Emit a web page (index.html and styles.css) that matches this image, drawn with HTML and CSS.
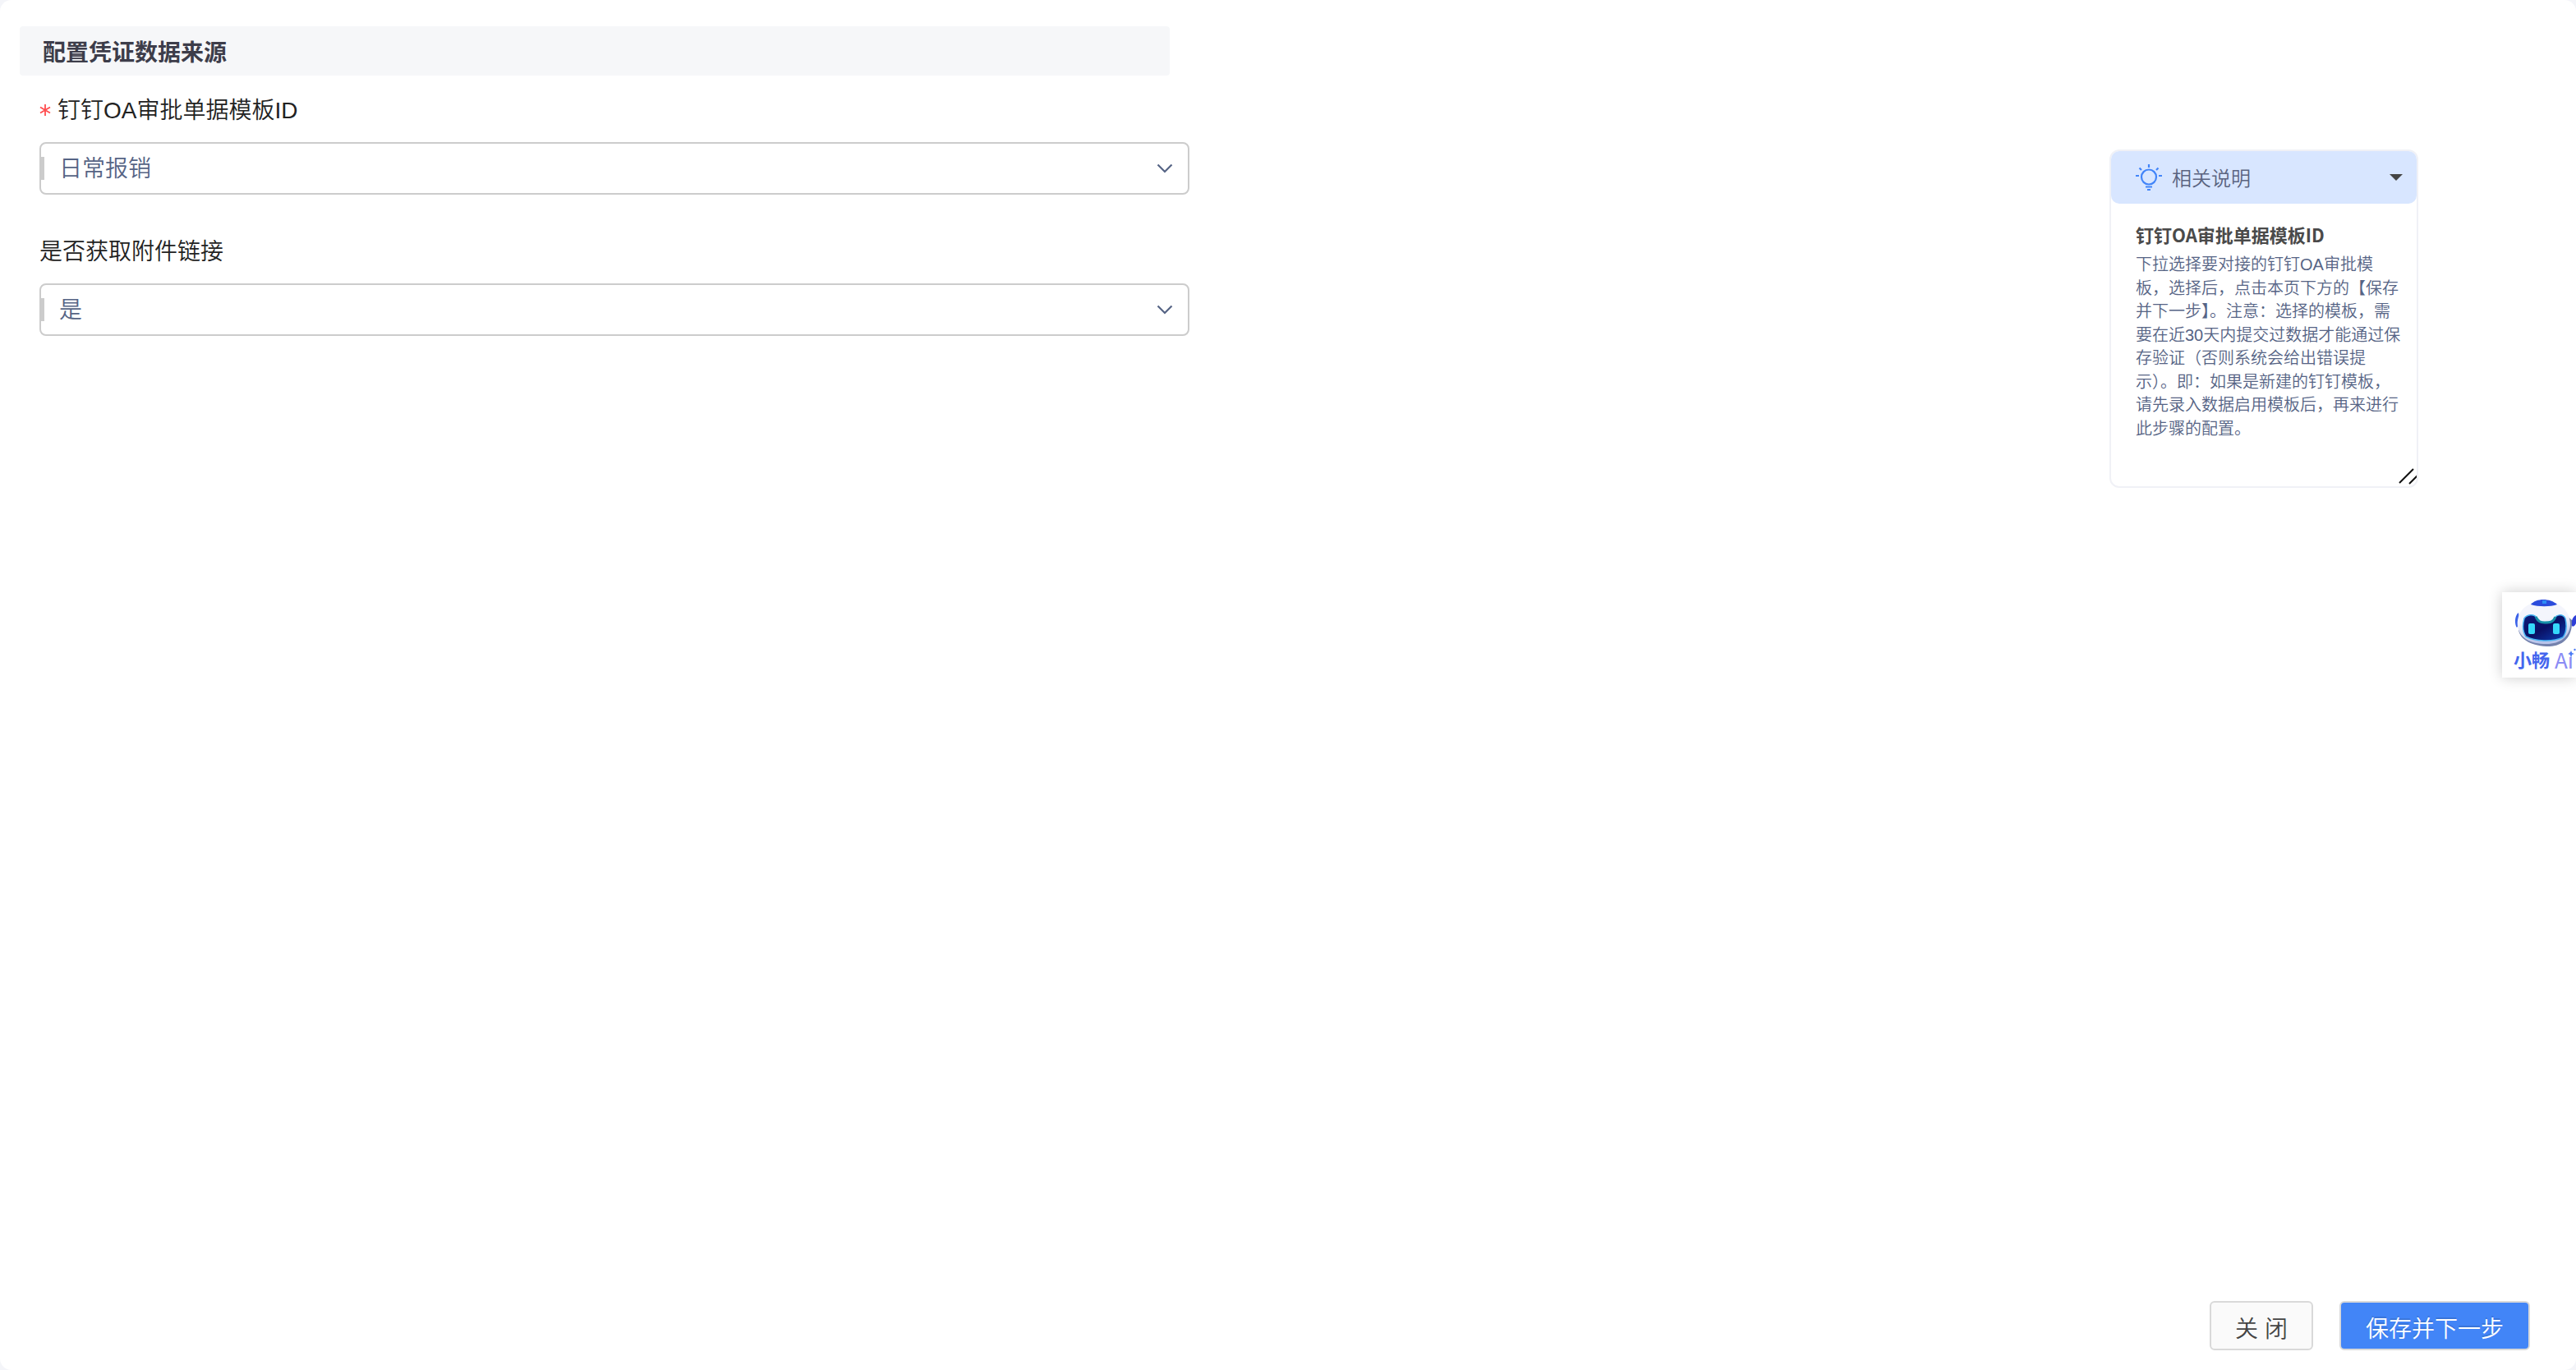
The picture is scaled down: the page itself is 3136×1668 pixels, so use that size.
FILE: index.html
```html
<!DOCTYPE html>
<html lang="zh-CN">
<head>
    <meta charset="UTF-8">
    <meta name="viewport" content="width=device-width, initial-scale=1.0">
    <title>配置凭证数据来源</title>
    <link rel="stylesheet" href="styles.css">
</head>
<body>
    <div class="page">
        <div class="main">
            <!-- 左侧表单 -->
            <form class="form">
                <h2 class="title">配置凭证数据来源</h2>
                <div class="item">
                    <label class="label">
                        <svg class="required" width="14" height="16" viewBox="0 0 14 16">
                            <path d="M7 1V15M1 4.5L13 11.5M13 4.5L1 11.5" />
                        </svg>
                        钉钉OA审批单据模板ID
                    </label>
                    <div class="select">
                        <span class="value">日常报销</span>
                        <svg class="arrow" width="20" height="12" viewBox="0 0 20 12">
                            <path d="M1.5 1.5L10 10L18.5 1.5" />
                        </svg>
                    </div>
                </div>
                <div class="item">
                    <label class="label">是否获取附件链接</label>
                    <div class="select">
                        <span class="value">是</span>
                        <svg class="arrow" width="20" height="12" viewBox="0 0 20 12">
                            <path d="M1.5 1.5L10 10L18.5 1.5" />
                        </svg>
                    </div>
                </div>
            </form>
            <!-- 右侧说明 -->
            <div class="help">
                <div class="help-head">
                    <svg class="bulb" width="32" height="32" viewBox="0 0 32 32">
                        <circle cx="16" cy="15.5" r="9" />
                        <path d="M12 27.5H20M14 31H18M16 0V4M0 14H4M28 14H32M4.5 4.5L7 7M27.5 4.5L25 7" />
                    </svg>
                    <span class="help-name">相关说明</span>
                    <i class="caret"></i>
                </div>
                <div class="help-body">
                    <h3>钉钉OA审批单据模板ID</h3>
                    <p>下拉选择要对接的钉钉OA审批模板，选择后，点击本页下方的【保存并下一步】。注意：选择的模板，需要在近30天内提交过数据才能通过保存验证（否则系统会给出错误提示）。即：如果是新建的钉钉模板，请先录入数据启用模板后，再来进行此步骤的配置。</p>
                </div>
                <svg class="resize" width="22" height="20" viewBox="0 0 22 20">
                    <path d="M1 18L18 1M13 19L23 9" />
                </svg>
            </div>
        </div>
        <!-- 底部按钮 -->
        <div class="footer">
            <button class="btn">关 闭</button>
            <button class="btn primary">保存并下一步</button>
        </div>
    </div>
    <!-- 悬浮的智能助手 -->
    <div class="robot">
        <svg class="face" width="76" height="60" viewBox="0 0 76 60">
            <defs>
                <linearGradient id="head" x1="0" y1="0" x2="0.2" y2="1">
                    <stop offset="0.5" stop-color="#f4f5fc" />
                    <stop offset="1" stop-color="#b9c4ea" />
                </linearGradient>
                <linearGradient id="screen" x1="0" y1="0" x2="1" y2="1">
                    <stop offset="0" stop-color="#0d1a78" />
                    <stop offset="0.5" stop-color="#0a1064" />
                    <stop offset="1" stop-color="#0c3fb4" />
                </linearGradient>
            </defs>
            <path d="M6 17C1 20 1 32 4 35L8 30Z" fill="#3b62e8" />
            <path d="M76 20C72 21 69 30 71 33C73 35 75 32 76 30Z" fill="#2f3fd8" />
            <path d="M6 38C8 50 22 58 44 58C62 57 72 45 71 26L64 20Z" fill="#7482ad" />
            <path d="M5 34C3 22 10 3 37 3C58 3 69 16 69 32C68 46 57 55 40 55C20 55 8 48 5 34Z" fill="url(#head)" />
            <path d="M21 7C27 -1 45 -1 53 7C45 10 30 10 21 7Z" fill="#2b4cdc" />
            <path d="M35 2H40V6H35Z" fill="#2d8cf5" />
            <path d="M13 24C16 19 25 18 28 23C30 28 33 29 38 29C44 29 48 29 50 24C52 19 60 18 63 24C65 33 64 42 60 47C48 53 26 52 15 46C11 40 11 31 13 24Z" fill="url(#screen)" stroke="#49b4f2" stroke-width="1.5" />
            <path d="M27 22C30 28 33 29 38 29C44 29 48 29 51 22" fill="none" stroke="#168fa8" stroke-width="3" />
            <rect x="18" y="30" width="8" height="13" rx="2" fill="#35d8fa" />
            <rect x="48" y="30" width="8" height="13" rx="2" fill="#35d8fa" />
        </svg>
        <div class="robot-name">
            <span>小畅</span>
            <em>Ai</em>
            <svg class="star" width="10" height="12" viewBox="0 0 10 12">
                <path d="M4 3L5.2 6L8 7L5.2 8L4 12L2.8 8L0 7L2.8 6Z" />
                <circle cx="8.5" cy="2" r="1.2" />
            </svg>
        </div>
    </div>
</body>
</html>
```

FILE: styles.css
```css
* {
    box-sizing: border-box;
    margin: 0;
    padding: 0;
}

body {
    height: 1668px;
    overflow: hidden;
    background-color: #f4f5f9;
    font-family: "Liberation Sans", "Noto Sans CJK SC", sans-serif;
    font-size: 28px;
    font-weight: 350;
}

.page {
    display: flex;
    flex-direction: column;
    justify-content: space-between;
    height: 1668px;
    padding: 32px 56px 24px 24px;
    border-radius: 14px;
    background-color: #fff;
}

.main {
    display: flex;
    justify-content: space-between;
    align-items: flex-start;
}

/* 表单 */
.form {
    width: 1424px;
}

.title {
    width: 1400px;
    height: 60px;
    padding-left: 28px;
    border-radius: 4px;
    background-color: #f6f7f9;
    color: #3d3d4a;
    font-size: 28px;
    line-height: 65px;
}

.item {
    height: 172px;
    padding-left: 24px;
}

.label {
    display: flex;
    height: 81px;
    color: #222;
    line-height: 85px;
}

.required {
    margin: 34px 8px 0 0;
    fill: none;
    stroke: #ff4d4f;
    stroke-width: 1.8;
}

.select {
    position: relative;
    display: flex;
    justify-content: space-between;
    align-items: center;
    height: 64px;
    padding: 0 18px 0 22px;
    border: 2px solid #ccc;
    border-radius: 8px;
    color: #566485;
}

.select::before {
    content: "";
    position: absolute;
    left: 0;
    top: 16px;
    width: 4px;
    height: 28px;
    background-color: #ccc;
}

.value {
    padding-bottom: 4px;
}

.arrow {
    fill: none;
    stroke: #566485;
    stroke-width: 2.2;
}

/* 相关说明 */
.help {
    position: relative;
    width: 376px;
    height: 412px;
    margin: 150px 136px 0 0;
    border: 2px solid #f0f1f6;
    border-radius: 12px;
}

.help-head {
    display: flex;
    align-items: center;
    height: 64px;
    padding: 0 17px 0 30px;
    border-radius: 10px;
    background-color: #d8e6ff;
}

.bulb {
    fill: none;
    stroke: #4285f9;
    stroke-width: 2.2;
}

.help-name {
    flex: 1;
    margin-left: 12px;
    padding-bottom: 2px;
    color: #5a6480;
    font-size: 24px;
}

.caret {
    border: 8px solid transparent;
    border-top-color: #444;
    border-bottom: 0;
}

.help-body {
    padding: 21px 16px 0 30px;
}

.help-body h3 {
    color: #4a4a4a;
    font-family: "Noto Sans CJK SC", sans-serif;
    font-size: 22px;
    line-height: 32px;
}

.help-body p {
    margin-top: 7px;
    color: #566485;
    font-size: 20px;
    line-height: 28.5px;
}

.resize {
    position: absolute;
    right: 0;
    bottom: 2px;
    fill: none;
    stroke: #111;
    stroke-width: 2;
}

/* 按钮 */
.footer {
    display: flex;
    justify-content: flex-end;
    gap: 32px;
}

.btn {
    width: 126px;
    height: 60px;
    padding-top: 3px;
    border: 2px solid #d9d9d9;
    border-radius: 6px;
    background-color: #fafafa;
    color: #444;
    font-family: inherit;
    font-size: 28px;
    font-weight: inherit;
}

.primary {
    width: 232px;
    background-color: #4285f7;
    color: #fff;
    text-shadow: 0 -2px 0 rgba(0, 0, 0, 0.12);
}

/* 助手 */
.robot {
    position: absolute;
    right: 0;
    top: 721px;
    width: 90px;
    height: 104px;
    padding: 8px 0 0 14px;
    overflow: hidden;
    background-color: #fff;
    box-shadow: 0 0 16px rgba(0, 0, 0, 0.2);
}

.face {
    display: block;
}

.robot-name {
    position: relative;
    display: flex;
    gap: 6px;
    height: 30px;
    color: #4466ee;
    font-size: 22px;
    font-weight: bold;
    line-height: 32px;
    white-space: nowrap;
}

.robot-name em {
    color: #8b8cf5;
    font-family: "Noto Sans CJK SC", sans-serif;
    font-size: 26px;
    font-style: normal;
    font-weight: normal;
    line-height: 28px;
}

.star {
    position: absolute;
    right: 0;
    top: 0;
    fill: #4a7cf5;
}
```
